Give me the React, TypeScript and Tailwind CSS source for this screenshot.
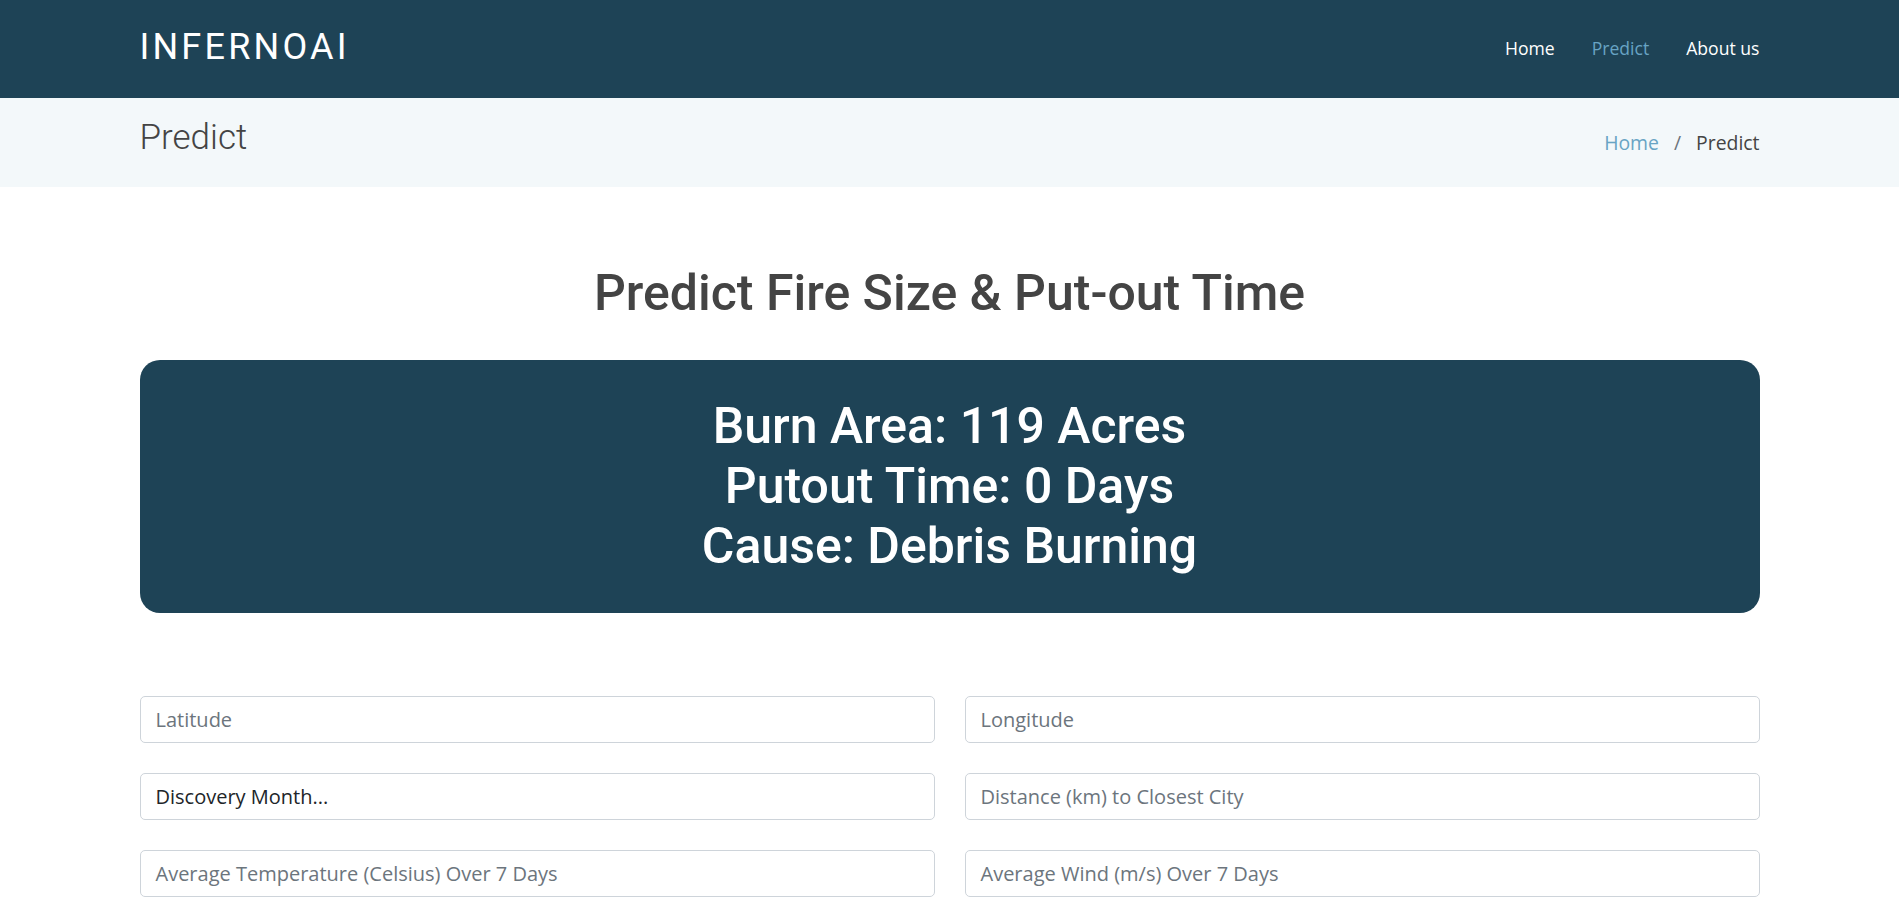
import React from "react";

const fields: { label: string; value?: boolean }[] = [
  { label: "Latitude" },
  { label: "Longitude" },
  { label: "Discovery Month...", value: true },
  { label: "Distance (km) to Closest City" },
  { label: "Average Temperature (Celsius) Over 7 Days" },
  { label: "Average Wind (m/s) Over 7 Days" },
];

export default function App() {
  return (
    <div className="min-h-screen bg-white font-['Open_Sans',sans-serif] text-[#444444]">
      <header className="h-[98px] bg-[#1e4356]">
        <div className="mx-auto flex h-full w-[1620px] items-center justify-between">
          <div className="font-['Roboto',sans-serif] text-[36px] font-normal leading-none tracking-[3.2px] text-white mt-[-4px]">
            INFERNOAI
          </div>
          <nav className="mt-[-2px] flex items-center gap-[37px] text-[17.6px] text-white">
            <a className="text-white">Home</a>
            <a className="text-[#68a4c4]">Predict</a>
            <a className="text-white">About us</a>
          </nav>
        </div>
      </header>

      <section className="h-[89px] bg-[#f3f8fa]">
        <div className="mx-auto flex w-[1620px] items-start justify-between pt-[22px]">
          <h2 className="font-['Roboto',sans-serif] text-[35px] font-light leading-[35px] text-[#444444]">
            Predict
          </h2>
          <ol className="mt-[10px] flex items-center text-[19.4px] leading-[26px]">
            <li className="text-[#68a4c4]">Home</li>
            <li className="px-[15px] text-[#6c757d]">/</li>
            <li className="text-[#444444]">Predict</li>
          </ol>
        </div>
      </section>

      <main className="mx-auto w-[1620px] pt-[76px]">
        <h1 className="text-center font-['Roboto',sans-serif] text-[50px] font-medium leading-[60px] text-[#444444]">
          Predict Fire Size &amp; Put-out Time
        </h1>

        <div className="mt-[37px] rounded-[20px] bg-[#1e4356] pt-[36px] pb-[37px] text-center font-['Roboto',sans-serif] text-[50px] font-medium leading-[60px] text-white">
          <div>Burn Area: 119 Acres</div>
          <div>Putout Time: 0 Days</div>
          <div>Cause: Debris Burning</div>
        </div>

        <form className="mt-[83px] grid grid-cols-2 gap-x-[30px] gap-y-[30px]">
          {fields.map((f) => (
            <div
              key={f.label}
              className={
                f.value
                  ? "flex h-[47px] items-center rounded-[5px] border border-[#ced4da] bg-white px-[15px] text-[20px] text-[#212529]"
                  : "flex h-[47px] items-center rounded-[5px] border border-[#ced4da] bg-white px-[15px] text-[20px] text-[#6c757d]"
              }
            >
              {f.label}
            </div>
          ))}
        </form>
      </main>
    </div>
  );
}
